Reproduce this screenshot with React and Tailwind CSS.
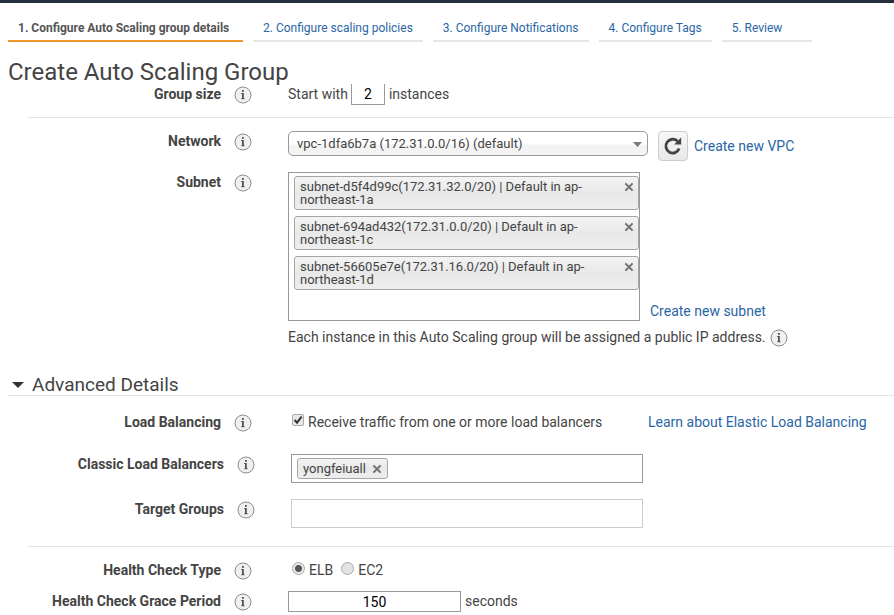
import { useState } from "react";

function InfoIcon() {
  return (
    <svg className="h-[18px] w-[18px] shrink-0" viewBox="0 0 18 18" role="img" aria-label="Info">
      <circle cx="9" cy="9" r="8" fill="#f0f0f0" stroke="#8c8c8c" strokeWidth="1" />
      <path d="M7.200 7h2.600v6H8V8h-.8z" fill="#505050" />
      <path d="M7.200 12.300h3.400v.9H7.200z" fill="#505050" />
      <rect x="8" y="4" width="1.800" height="1.800" fill="#505050" />
    </svg>
  );
}

function CloseIcon() {
  return (
    <svg className="h-[10px] w-[10px]" viewBox="0 0 10 10" aria-hidden="true">
      <path d="M1.400 1.400l7.200 7.200M8.600 1.400L1.400 8.600" stroke="#707070" strokeWidth="2" />
    </svg>
  );
}

function RefreshIcon() {
  return (
    <svg className="h-5 w-5" viewBox="0 0 20 20" aria-hidden="true">
      <path d="M16.200 12.600A6.900 6.900 0 1 1 14.600 5.200" fill="none" stroke="#444" strokeWidth="2.800" />
      <path d="M18.200 1.600v7h-7z" fill="#444" />
    </svg>
  );
}

function Row({ label, htmlFor, wide, className, children }) {
  return (
    <div className={`flex items-start ${className || ""}`}>
      <div className={`flex shrink-0 items-start justify-end gap-[13px] ${wide ? "w-[255px]" : "w-[252px]"}`}>
        <label htmlFor={htmlFor} className="font-bold leading-5">
          {label}
        </label>
        <span className="pt-[2px]">
          <InfoIcon />
        </span>
      </div>
      <div className="min-w-0 flex-1 pl-9">{children}</div>
    </div>
  );
}

const steps = [
  "1. Configure Auto Scaling group details",
  "2. Configure scaling policies",
  "3. Configure Notifications",
  "4. Configure Tags",
  "5. Review",
];

const subnets = [
  "subnet-d5f4d99c(172.31.32.0/20) | Default in ap-northeast-1a",
  "subnet-694ad432(172.31.0.0/20) | Default in ap-northeast-1c",
  "subnet-56605e7e(172.31.16.0/20) | Default in ap-northeast-1d",
];

const link = "text-[#2a66a5] hover:underline";
const chip = "rounded-[3px] border border-[#a5a5a5] bg-linear-to-b from-[#f4f4f4] via-[#e8e8e8] to-[#eeeeee] text-[13px] leading-[13px]";

export default function App() {
  const [open, setOpen] = useState(true);
  return (
    <div className="min-h-screen border-t-[3px] border-[#232f3a] bg-white font-[Roboto,'Liberation_Sans',sans-serif] text-[14px] leading-5 text-[#444]">
      <nav className="flex gap-[10px] pt-[13px] pl-2 text-[12px] leading-6">
        {steps.map((step, i) => (
          <a
            key={step}
            href="#"
            aria-current={i === 0 ? "step" : undefined}
            className={`border-b-2 px-[10px] whitespace-nowrap ${
              i === 0
                ? "min-w-[235px] border-[#f0982d] font-bold text-[#555]"
                : "min-w-[90px] border-[#e6e6e6] text-[#2a66a5]"
            }`}
          >
            {step}
          </a>
        ))}
      </nav>

      <h1 className="mt-4 pl-2 text-[24px] leading-7">Create Auto Scaling Group</h1>

      <Row label="Group size" htmlFor="size" className="-mt-[2px]">
        <div className="flex items-start">
          <span>Start with</span>
          <input
            id="size"
            defaultValue="2"
            className="ml-[3px] h-[21px] w-[34px] border border-t-0 border-[#999] text-center text-black outline-none"
          />
          <span className="ml-1">instances</span>
        </div>
      </Row>

      <hr className="mt-3 ml-7 border-[#e3e3e3]" />

      <Row label="Network" htmlFor="network" className="pt-[13px]">
        <div className="flex items-start">
          <div className="relative w-[360px]">
            <select
              id="network"
              className="block h-[25px] w-full appearance-none rounded-[5px] border border-[#999] bg-linear-to-b from-white from-50% to-[#f3f3f3] to-60% pl-2 text-[13px] outline-none"
            >
              <option>vpc-1dfa6b7a (172.31.0.0/16) (default)</option>
            </select>
            <svg className="pointer-events-none absolute top-[11px] right-[6px] h-[5px] w-[9px]" viewBox="0 0 9 5" aria-hidden="true">
              <path d="M0 0h9L4.500 5z" fill="#777" />
            </svg>
          </div>
          <button
            type="button"
            aria-label="Refresh"
            className="ml-[10px] flex h-[30px] w-[30px] items-center justify-center rounded-[4px] border border-[#ccc] bg-linear-to-b from-[#f7f7f7] to-[#e8e8e8]"
          >
            <RefreshIcon />
          </button>
          <a href="#" className={`ml-[6px] pt-[5px] ${link}`}>
            Create new VPC
          </a>
        </div>
      </Row>

      <Row label="Subnet" className="pt-[11px]">
        <div className="flex items-end">
          <ul className="flex h-[149px] w-[352px] flex-col gap-[6px] border border-[#999] pt-[3px] pl-[5px]">
            {subnets.map((s) => (
              <li key={s} className={`flex items-start py-[3px] pr-1 pl-[5px] ${chip}`}>
                <span className="w-[285px]">{s}</span>
                <button type="button" aria-label="Remove subnet" className="mt-[2px] ml-auto">
                  <CloseIcon />
                </button>
              </li>
            ))}
          </ul>
          <a href="#" className={`ml-[10px] ${link}`}>
            Create new subnet
          </a>
        </div>
        <div className="mt-[6px] flex items-start gap-1">
          <span>Each instance in this Auto Scaling group will be assigned a public IP address.</span>
          <span className="pt-[2px]">
            <InfoIcon />
          </span>
        </div>
      </Row>

      <h2 className="mt-7 ml-2 border-b border-[#e3e3e3]">
        <button
          type="button"
          aria-expanded={open}
          onClick={() => setOpen(!open)}
          className="flex items-center gap-2 pl-1 text-[19px] leading-5"
        >
          <svg className="h-[6px] w-3" viewBox="0 0 12 6" aria-hidden="true">
            <path d="M0 0h12L6 6z" fill="#333" />
          </svg>
          Advanced Details
        </button>
      </h2>

      {open && (
        <div className="pt-4">
          <Row label="Load Balancing" htmlFor="receive">
            <div className="flex">
              <div className="flex w-[360px] items-start">
                <span className="relative mt-[2px] ml-1">
                  <input
                    id="receive"
                    type="checkbox"
                    defaultChecked
                    className="peer block h-3 w-3 appearance-none rounded-[2px] border border-[#aaa] bg-[#e8e8e8]"
                  />
                  <svg className="pointer-events-none absolute top-0 left-0 hidden h-3 w-3 peer-checked:block" viewBox="0 0 12 12" aria-hidden="true">
                    <path d="M2.600 6l2.400 2.700L9.600 2.600" fill="none" stroke="#333" strokeWidth="2" />
                  </svg>
                </span>
                <label htmlFor="receive" className="ml-1 whitespace-nowrap">
                  Receive traffic from one or more load balancers
                </label>
              </div>
              <a href="#" className={link}>
                Learn about Elastic Load Balancing
              </a>
            </div>
          </Row>

          <Row label="Classic Load Balancers" htmlFor="clb" wide className="pt-[22px]">
            <div className="flex h-[29px] w-[352px] items-center border border-[#999] pl-[5px]">
              <span className={`flex h-[21px] items-center gap-[6px] px-[5px] ${chip}`}>
                yongfeiuall
                <button type="button" aria-label="Remove yongfeiuall">
                  <CloseIcon />
                </button>
              </span>
              <input id="clb" className="h-full min-w-0 flex-1 outline-none" />
            </div>
          </Row>

          <Row label="Target Groups" htmlFor="tg" wide className="pt-4">
            <input id="tg" className="block h-[29px] w-[352px] border border-[#ccc] px-[5px] outline-none" />
          </Row>

          <hr className="mt-[18px] ml-7 border-[#e3e3e3]" />

          <Row label="Health Check Type" className="pt-[13px]">
            <div className="flex">
              {["ELB", "EC2"].map((type) => (
                <label key={type} className="ml-1 flex items-start gap-1 pr-1">
                  <input
                    type="radio"
                    name="health"
                    defaultChecked={type === "ELB"}
                    className="mt-[2px] h-[13px] w-[13px] appearance-none rounded-full border border-[#aaa] bg-[#e2e2e2] checked:bg-[radial-gradient(circle,#555_3px,#e8e8e8_4px)]"
                  />
                  {type}
                </label>
              ))}
            </div>
          </Row>

          <Row label="Health Check Grace Period" htmlFor="grace" className="pt-[11px]">
            <div className="flex items-start">
              <input
                id="grace"
                defaultValue="150"
                className="h-[21px] w-[173px] border border-[#999] text-center text-black outline-none"
              />
              <span className="ml-1">seconds</span>
            </div>
          </Row>
        </div>
      )}
    </div>
  );
}
